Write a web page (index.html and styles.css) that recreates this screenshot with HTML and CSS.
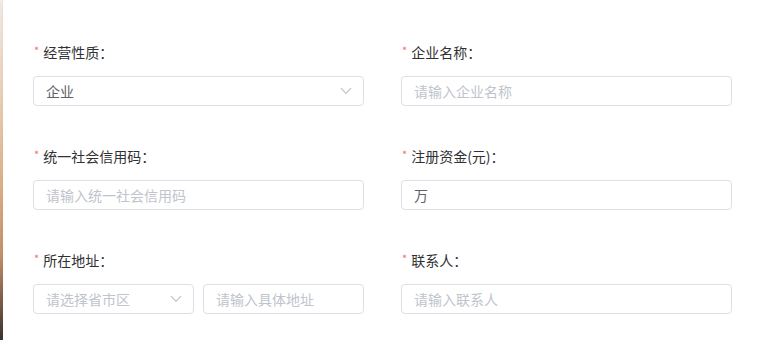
FILE: index.html
```html
<!DOCTYPE html>
<html lang="zh-CN">
<head>
<meta charset="utf-8">
<title>企业信息</title>
<link rel="stylesheet" href="styles.css">
</head>
<body>
<div class="page">
  <div class="edge"></div>
  <div class="card">
    <div class="form">
      <div class="field">
        <div class="label"><span class="req">*</span>经营性质：</div>
        <div class="control select">
          <span class="value">企业</span>
          <svg class="arrow" width="12" height="8" viewBox="0 0 12 8"><path d="M1 1.2 L6 6.4 L11 1.2" fill="none" stroke="#c0c4cc" stroke-width="1.2"/></svg>
        </div>
      </div>
      <div class="field">
        <div class="label"><span class="req">*</span>企业名称：</div>
        <div class="control"><span class="ph">请输入企业名称</span></div>
      </div>
      <div class="field">
        <div class="label"><span class="req">*</span>统一社会信用码：</div>
        <div class="control"><span class="ph">请输入统一社会信用码</span></div>
      </div>
      <div class="field">
        <div class="label"><span class="req">*</span>注册资金(元)：</div>
        <div class="control"><span class="value">万</span></div>
      </div>
      <div class="field">
        <div class="label"><span class="req">*</span>所在地址：</div>
        <div class="split">
          <div class="control select">
            <span class="ph">请选择省市区</span>
            <svg class="arrow" width="12" height="8" viewBox="0 0 12 8"><path d="M1 1.2 L6 6.4 L11 1.2" fill="none" stroke="#c0c4cc" stroke-width="1.2"/></svg>
          </div>
          <div class="control"><span class="ph">请输入具体地址</span></div>
        </div>
      </div>
      <div class="field">
        <div class="label"><span class="req">*</span>联系人：</div>
        <div class="control"><span class="ph">请输入联系人</span></div>
      </div>
    </div>
  </div>
</div>
</body>
</html>
```

FILE: styles.css
```css
html, body {
  margin: 0;
  padding: 0;
  background: #ffffff;
}
body {
  font-family: "Noto Sans CJK SC", "Noto Sans", sans-serif;
  width: 760px;
  height: 340px;
  overflow: hidden;
}
.page {
  display: flex;
  height: 340px;
}
.edge {
  width: 3px;
  flex: none;
  background: linear-gradient(180deg, #f7efe8 0%, #eed2b8 30%, #e2b387 55%, #c9936a 75%, #6b5244 92%, #3e3430 100%);
}
.card {
  flex: 1;
  background: #ffffff;
  box-shadow: -2px 0 4px rgba(0, 0, 0, 0.06);
  border-top-left-radius: 4px;
}
.form {
  display: grid;
  grid-template-columns: 331px 331px;
  column-gap: 37px;
  row-gap: 40px;
  padding: 42px 0 0 30px;
}
.label {
  height: 20px;
  line-height: 20px;
  font-size: 14px;
  color: #303133;
  margin-bottom: 14px;
  display: flex;
  align-items: center;
}
.req {
  color: #f56c6c;
  font-size: 11px;
  margin-left: 1px;
  margin-right: 4px;
  position: relative;
  top: -2px;
}
.control {
  box-sizing: border-box;
  height: 30px;
  border: 1px solid #dcdfe6;
  border-radius: 4px;
  padding: 0 12px;
  display: flex;
  align-items: center;
  font-size: 14px;
  background: #fff;
}
.select {
  justify-content: space-between;
  padding-right: 11px;
}
.value {
  color: #606266;
}
.ph {
  color: #c0c4cc;
}
.split {
  display: grid;
  grid-template-columns: 161px 161px;
  column-gap: 9px;
}
```
